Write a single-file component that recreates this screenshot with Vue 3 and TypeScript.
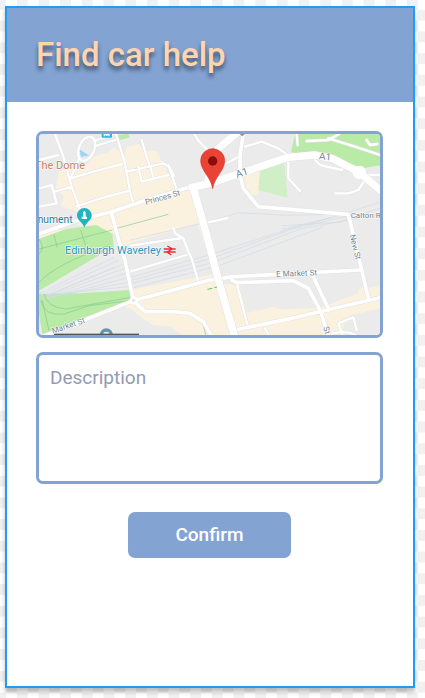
<script setup lang="ts">
import { ref } from 'vue'

const description = ref('')
</script>

<template>
  <div class="canvas">
    <main class="screen">
      <header class="header">
        <h1>Find car help</h1>
      </header>
      <form class="content" @submit.prevent>
        <svg class="map" viewBox="0 0 1023 603" role="img" aria-label="Map of Edinburgh Waverley">
          <rect width="1023" height="603" fill="#ebebeb" />

          <!-- built-up blocks -->
          <g fill="#faf2df">
            <path d="M165 68L208 55L225 40L258 65L262 40L298 30L320 52L350 50L365 76L376 90L384 115L415 163L453 171L503 303L520 390L340 360L245 330L235 300L118 272L120 235L65 215L75 185L50 170L60 110L150 90Z" />
            <path d="M0 288H80L0 315ZM238 288H405L275 320L240 328Z" />
            <path d="M283 463L513 408L538 406L550 450L600 452L623 538L680 524L703 518L725 526L840 522L958 478L962 460L985 462L1023 454V523L930 545L900 603H430L395 578L343 573L310 553L273 523L260 520Z" />
            <path d="M613 123L663 113L658 183L628 183Z" />
          </g>
          <path d="M262 330L300 320L403 290L475 270L530 420L285 465Z" fill="#ebebeb" />

          <!-- parks -->
          <g fill="#b9eaa6">
            <path d="M768 0L756 55L845 70L905 95L965 104L1023 94V0Z" />
            <path d="M0 315L80 285L173 273L220 300L224 338L0 470Z" />
            <path d="M0 480L123 478L273 468L284 495L60 585L10 600L0 540Z" />
            <path d="M238 3L268 0L272 10L242 18Z" />
            <path d="M663 108L736 88L746 191L658 168Z" fill="#d0efc6" />
          </g>
          <path d="M120 45L126 68L151 65Z" fill="#9fd3f5" />

          <!-- railway tracks -->
          <g class="tracks">
            <path d="M0 480L225 370M5 484L240 378M10 488L250 392M15 492L260 402M20 494L265 416M20 496L270 430M20 492L272 444M20 482L272 458M25 486L225 400" />
            <path d="M275 430L520 360L740 288L880 250L1023 205M275 440L520 372L760 285L930 245M278 448L520 386L780 286L1023 240M280 462L540 395L850 280M275 318L500 265L600 236L740 244L920 240M730 275L900 265L1023 222M730 286L880 250" />
          </g>
          <g class="paths">
            <path d="M0 315Q20 345 0 360M45 302L55 340M125 288L140 335M0 345L220 288M0 445Q50 390 210 335M5 498Q15 548 75 540L150 515L275 500M15 480Q25 520 80 525L275 490M10 500L30 590M233 283L388 241M488 552L500 603" />
          </g>

          <!-- minor streets: casing, then fill -->
          <g v-for="layer in ['casing', 'fill']" :key="layer" :class="['minor', layer]">
            <path d="M48 0L73 68L98 158L138 270M231 0L258 88L273 173L285 213M0 78L58 63M95 133L163 113L250 90M112 217L198 189L273 170M263 113L373 88L390 98L405 125M388 93L415 173M308 18L323 68L343 128M298 98L308 143L388 123M0 163L38 153L53 208L0 218M48 173L98 158M168 20L225 0M172 35L228 18M120 75L93 138" />
            <ellipse cx="143" cy="44" rx="23" ry="38" transform="rotate(22 143 44)" />
            <path d="M466 0L478 20L513 55M558 90L605 65M618 38L668 23L718 43L748 65L748 133L783 171M773 0L776 33M803 21L868 18L900 0M868 13L948 38L1023 63M983 18L993 33L1015 30M828 78L843 93L908 108L920 95M978 123H1023M888 178L928 178L958 168L978 138M508 265L565 252" />
            <path d="M403 280L408 298L433 313L448 353L458 373L478 443M273 413L443 363M275 335L430 312M593 448L628 583M678 583L688 603M898 568L943 550L953 588M898 568L910 603M870 603Q910 585 950 603" />
          </g>
          <g v-for="layer in ['casing', 'fill']" :key="layer" :class="['medium', layer]">
            <path d="M0 300L118 258L218 233L313 201L423 168L465 155M218 238L235 303L258 378L283 498M613 0L603 63L603 123L613 163L658 218L928 241L943 303L968 408L988 493M15 606L283 500L513 438L583 428L963 408M283 500L318 533L403 533L453 538L493 563L516 603M578 438L593 446L763 440L808 463L843 528L868 603M823 428L870 528M588 588L758 553L1023 491" />
          </g>
          <g v-for="layer in ['casing', 'fill']" :key="layer" :class="['major', layer]">
            <path d="M463 163L503 303L538 438L586 603M458 160L513 148L618 113L748 70L828 63L878 73L958 113L1030 173M595 -4L538 43L505 145" />
          </g>
          <circle cx="961" cy="115" r="20" fill="#fff" />
          <circle cx="284" cy="499" r="12" fill="#fff" />
          <circle cx="284" cy="499" r="5" fill="#e4e4e4" />
          <path d="M505 466L520 463M526 461L534 459" stroke="#62c66e" stroke-width="3" />
          <path d="M602 0H618L610 7Z" fill="#8a9399" />

          <!-- place markers -->
          <rect x="188" y="-12" width="31" height="23" rx="3" fill="#29b6e8" />
          <path d="M196 7V-2L203 4L210 -2V7" fill="none" stroke="#fff" stroke-width="4" />
          <path d="M136 281C132 265 114 261 114 244A22 22 0 1 1 158 244C158 261 140 265 136 281Z" fill="#20b3c1" />
          <path d="M136 230L140 235V248H144V255H128V248H132V235Z" fill="#fff" />
          <circle cx="202" cy="603" r="15" fill="none" stroke="#6596ad" stroke-width="10" />
          <path d="M374 345H410M374 354H410M385 336L400 345L384 354L397 363" fill="none" stroke="#ed2939" stroke-width="4" />
          <rect x="45" y="599" width="255" height="4" fill="#555" />

          <!-- labels -->
          <g class="labels">
            <text x="138" y="104" text-anchor="end" class="place">The Dome</text>
            <text x="101" y="267" text-anchor="end" class="landmark">nument</text>
            <text x="78" y="361" class="station">Edinburgh Waverley</text>
            <text transform="translate(321 213) rotate(-16)">Princes St</text>
            <text transform="translate(594 131) rotate(-17)" class="route">A1</text>
            <text transform="translate(839 76) rotate(5)" class="route">A1</text>
            <text x="935" y="253">Calton R</text>
            <text transform="translate(932 304) rotate(76)">New St</text>
            <text transform="translate(712 428) rotate(-2)">E Market St</text>
            <text transform="translate(42 599) rotate(-19)">Market St</text>
            <text transform="translate(853 580) rotate(75)">St</text>
          </g>

          <!-- selected location -->
          <path d="M521 164C517 130 485 110 485 80A36 36 0 1 1 557 80C557 110 525 130 521 164Z" fill="#ea4335" stroke="#d4362b" stroke-width="2" />
          <circle cx="521" cy="81" r="14" fill="#8c0b0b" />
        </svg>

        <textarea v-model="description" aria-label="Description" placeholder="Description"></textarea>
        <button type="submit">Confirm</button>
      </form>
    </main>
  </div>
</template>

<style>
body {
  margin: 0;
}
</style>

<style scoped>
.canvas {
  box-sizing: border-box;
  min-height: 100vh;
  padding: 6px 10px 10px 5px;
  display: flex;
  font-family: Roboto, "Liberation Sans", sans-serif;
  background: repeating-conic-gradient(#f1f1f1 0 25%, #fff 0 50%) 6px -1px / 5.1vw 5.1vw;
}

.screen {
  flex: 1;
  border: 2px solid #209cf6;
  background: #fff;
  box-shadow: 0 4px 4px rgba(0, 0, 0, 0.25);
}

.header {
  display: flex;
  align-items: center;
  height: 94px;
  padding: 0 29px;
  background: #83a3d3;
}

h1 {
  margin: 0;
  font-size: 33px;
  font-weight: 500;
  line-height: 40px;
  color: #ffd4ae;
  text-shadow: 0 4px 4px rgba(0, 0, 0, 0.5);
}

.content {
  display: flex;
  flex-direction: column;
  padding: 29px 30px 29px 29px;
}

.map {
  display: block;
  box-sizing: border-box;
  width: 100%;
  height: auto;
  border: 3px solid #83a3d3;
  border-radius: 7px;
}

textarea {
  box-sizing: border-box;
  width: 100%;
  height: 132px;
  margin: 14px 0 28px;
  padding: 11px;
  border: 3px solid #83a3d3;
  border-radius: 7px;
  outline: none;
  resize: none;
  background: #fff;
  color: #4d5875;
  font: 400 19px/24px Roboto, "Liberation Sans", sans-serif;
}

textarea::placeholder {
  color: #929bb2;
  opacity: 1;
}

button {
  align-self: center;
  width: 163px;
  height: 46px;
  padding: 0;
  border: 0;
  border-radius: 7px;
  background: #83a3d3;
  color: #fff;
  font: 500 19px/24px Roboto, "Liberation Sans", sans-serif;
  cursor: pointer;
}

.tracks {
  fill: none;
  stroke: #d0dbe6;
  stroke-width: 2;
}

.paths {
  fill: none;
  stroke: #86c990;
  stroke-width: 2;
}

.minor,
.medium,
.major {
  fill: none;
  stroke: #fff;
  stroke-linecap: round;
  stroke-linejoin: round;
}

.minor {
  stroke-width: 7px;
}

.medium {
  stroke-width: 11px;
}

.major {
  stroke-width: 22px;
}

.casing {
  stroke: #e2e2e0;
}

.minor.casing {
  stroke-width: 10px;
}

.medium.casing {
  stroke-width: 14px;
}

.major.casing {
  stroke-width: 25px;
}

.labels {
  font-size: 24px;
  fill: #75838d;
  stroke: #fff;
  stroke-width: 3px;
  paint-order: stroke;
}

.route {
  font-size: 30px;
}

.place,
.landmark,
.station {
  font-size: 33px;
}

.place {
  fill: #d47c59;
}

.landmark {
  font-size: 31px;
  fill: #287f91;
}

.station {
  fill: #2696bd;
}
</style>
